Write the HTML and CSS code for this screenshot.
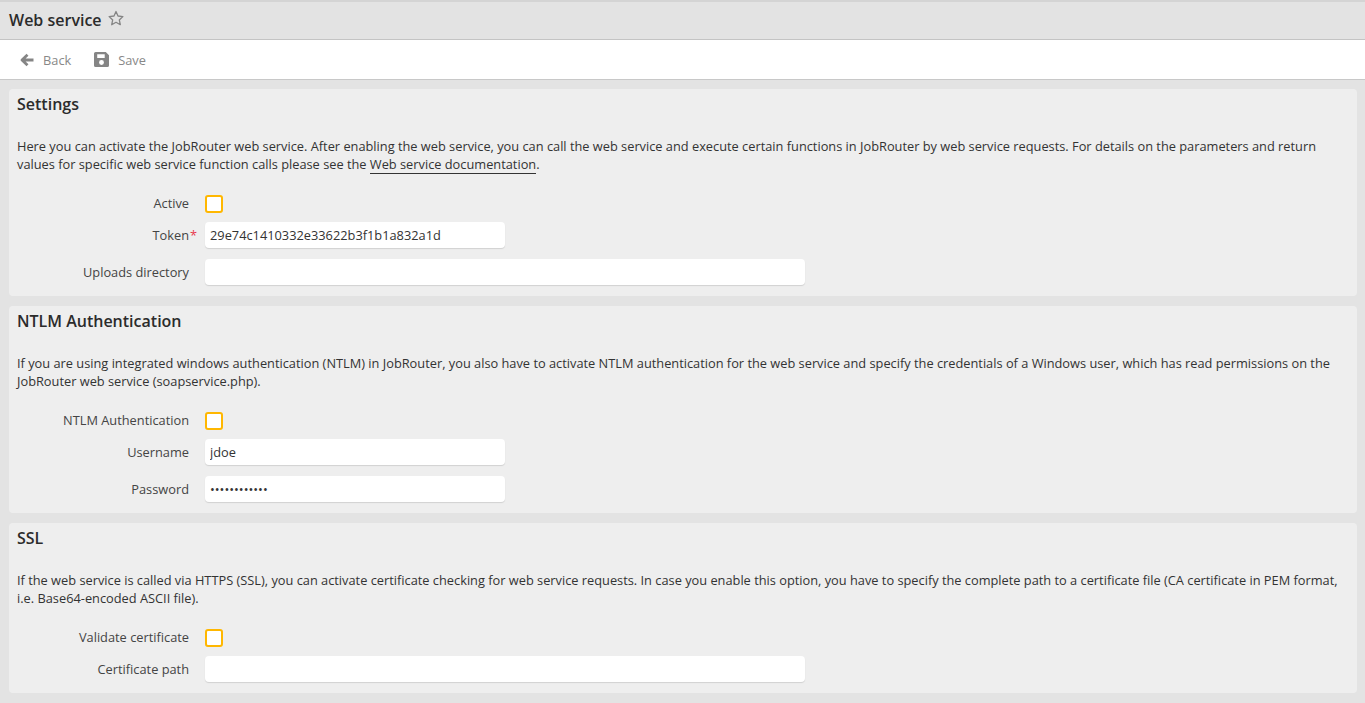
FILE: index.html
```html
<!DOCTYPE html>
<html lang="en">
<head>
    <meta charset="UTF-8">
    <title>Web service</title>
    <link rel="stylesheet" href="styles.css">
</head>
<body>
    <header class="title-bar">
        <h1>Web service</h1>
        <svg class="star" width="16" height="16" viewBox="0 0 16 16"><path d="M8 1.500l2 4.500 4.900.6-3.600 3.300 1 4.800L8 12.300l-4.300 2.400 1-4.800L1.100 6.600 6 6z" fill="none" stroke="#858585" stroke-width="1.300" stroke-linejoin="round"/></svg>
    </header>
    <nav class="toolbar">
        <a class="tool">
            <svg width="14" height="14" viewBox="0 0 14 14"><path d="M7.500 1.800L2 7l5.500 5.200M2.500 7H13.500" fill="none" stroke="#858585" stroke-width="2.800" stroke-linejoin="round"/></svg>
            Back
        </a>
        <a class="tool">
            <svg width="15" height="15" viewBox="1 1 14 14"><path fill-rule="evenodd" d="M2.500 1H12l3 3v9.500a1.500 1.500 0 0 1-1.500 1.500h-11A1.500 1.500 0 0 1 1 13.500v-11A1.500 1.500 0 0 1 2.500 1zM4 3v3.500h7V3zm4 5.500a2.300 2.300 0 1 0 0 4.600 2.300 2.300 0 0 0 0-4.600z" fill="#858585"/></svg>
            Save
        </a>
    </nav>
    <main class="content">
        <section class="panel">
            <h2>Settings</h2>
            <p>Here you can activate the JobRouter web service. After enabling the web service, you can call the web service and execute certain functions in JobRouter by web service requests. For details on the parameters and return values for specific web service function calls please see the <a class="doc-link">Web service documentation</a>.</p>
            <div class="form-row check-row">
                <label>Active</label>
                <span class="checkbox"></span>
            </div>
            <div class="form-row">
                <label>Token<span class="required">*</span></label>
                <input class="short" type="text" value="29e74c1410332e33622b3f1b1a832a1d">
            </div>
            <div class="form-row">
                <label>Uploads directory</label>
                <input class="long" type="text">
            </div>
        </section>
        <section class="panel">
            <h2>NTLM Authentication</h2>
            <p>If you are using integrated windows authentication (NTLM) in JobRouter, you also have to activate NTLM authentication for the web service and specify the credentials of a Windows user, which has read permissions on the JobRouter web service (soapservice.php).</p>
            <div class="form-row check-row">
                <label>NTLM Authentication</label>
                <span class="checkbox"></span>
            </div>
            <div class="form-row">
                <label>Username</label>
                <input class="short" type="text" value="jdoe">
            </div>
            <div class="form-row">
                <label>Password</label>
                <input class="short" type="password" value="123456789012">
            </div>
        </section>
        <section class="panel">
            <h2>SSL</h2>
            <p>If the web service is called via HTTPS (SSL), you can activate certificate checking for web service requests. In case you enable this option, you have to specify the complete path to a certificate file (CA certificate in PEM format, i.e. Base64-encoded ASCII file).</p>
            <div class="form-row check-row">
                <label>Validate certificate</label>
                <span class="checkbox"></span>
            </div>
            <div class="form-row">
                <label>Certificate path</label>
                <input class="long" type="text">
            </div>
        </section>
    </main>
</body>
</html>
```

FILE: styles.css
```css
html, body {
    height: 100%;
}
body {
    margin: 0;
    background-color: #e3e3e3;
    color: #333;
    font-family: "Open Sans", sans-serif;
    font-size: 12.8px;
    overflow: hidden;
}
.title-bar {
    display: flex;
    align-items: center;
    gap: 6px;
    height: 39px;
    padding-left: 9px;
    padding-bottom: 2px;
    box-sizing: border-box;
    background-color: #e3e3e3;
    border-top: 2px solid #d4d4d4;
}
.title-bar h1 {
    margin: 0;
    font-size: 16px;
    font-weight: 600;
    color: #2b2b2b;
}
.star {
    margin-top: -3px;
}
.toolbar {
    display: flex;
    align-items: center;
    gap: 23px;
    height: 41px;
    box-sizing: border-box;
    padding-left: 20px;
    background-color: #fff;
    border-top: 1px solid #c4c4c4;
    border-bottom: 1px solid #c8c8c8;
}
.tool {
    display: flex;
    align-items: center;
    gap: 9px;
    color: #888;
}
.content {
    display: flex;
    flex-direction: column;
    gap: 10px;
    padding: 9px 8px 0 9px;
}
.panel {
    background-color: #eee;
    border-radius: 4px;
    padding: 4px 8px 11px;
}
.panel h2 {
    margin: 0;
    font-size: 16px;
    font-weight: 600;
    line-height: 22px;
    color: #2b2b2b;
}
.panel p {
    margin: 22px 0;
    line-height: 18px;
    color: #333;
}
.doc-link {
    border-bottom: 1px solid #333;
}
.form-row {
    display: flex;
    align-items: center;
    gap: 16px;
    height: 26px;
    margin-top: 11px;
}
.check-row {
    height: 18px;
    margin-top: 0;
}
.check-row + .form-row {
    margin-top: 9px;
}
.check-row label {
    margin-top: -2px;
}
.form-row label {
    position: relative;
    width: 172px;
    text-align: right;
    color: #444;
}
.required {
    position: absolute;
    left: 100%;
    margin-left: 1px;
    color: #e8384f;
}
.checkbox {
    width: 14px;
    height: 14px;
    border: 2px solid #ffb700;
    border-radius: 3px;
    background-color: #fff;
}
input {
    box-sizing: border-box;
    height: 26px;
    padding: 0 5px;
    border: 0;
    border-radius: 4px;
    background-color: #fff;
    box-shadow: 0 1px 1px rgba(0, 0, 0, 0.12);
    color: #333;
    font-family: "Open Sans", sans-serif;
    font-size: 12.8px;
}
.short {
    width: 300px;
}
.long {
    width: 600px;
}
```
